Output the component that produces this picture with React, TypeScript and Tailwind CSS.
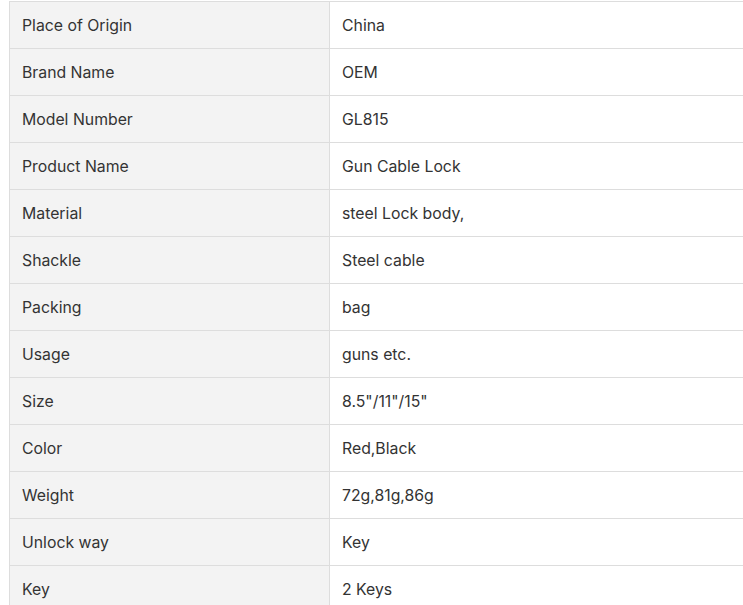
import React from "react";

const rows: [string, string][] = [
  ["Place of Origin", "China"],
  ["Brand Name", "OEM"],
  ["Model Number", "GL815"],
  ["Product Name", "Gun Cable Lock"],
  ["Material", "steel Lock body,"],
  ["Shackle", "Steel cable"],
  ["Packing", "bag"],
  ["Usage", "guns etc."],
  ["Size", "8.5\"/11\"/15\""],
  ["Color", "Red,Black"],
  ["Weight", "72g,81g,86g"],
  ["Unlock way", "Key"],
  ["Key", "2 Keys"],
];

export default function App() {
  return (
    <div
      className="w-[743px] h-[605px] overflow-hidden bg-white pl-[9px] pt-[1px] text-[15.8px] text-[#333333]"
      style={{ fontFamily: "Inter, 'Noto Sans', sans-serif" }}
    >
      <div className="w-[740px] border-t border-l border-[#dddddd]">
        {rows.map(([k, v]) => (
          <div key={k} className="flex h-[47px] border-b border-[#dddddd]">
            <div className="w-[320px] shrink-0 bg-[#f3f3f3] border-r border-[#dddddd] flex items-center pl-[12px] pt-[1px]">
              {k}
            </div>
            <div className="flex-1 flex items-center pl-[12px] pt-[1px]">{v}</div>
          </div>
        ))}
      </div>
    </div>
  );
}
